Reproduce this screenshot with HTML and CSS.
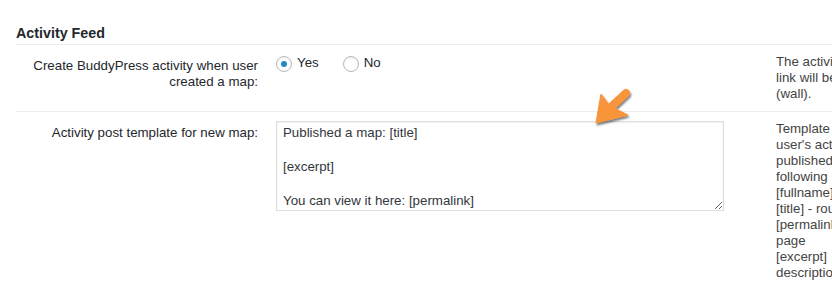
FILE: index.html
```html
<!DOCTYPE html>
<html lang="en">
<head>
<meta charset="utf-8">
<title>Activity Feed settings</title>
<link rel="stylesheet" href="styles.css">
</head>
<body>
<div class="page">
  <h2 class="section-title">Activity Feed</h2>

  <div class="form-row row-first">
    <div class="field-label">Create BuddyPress activity when user<br>created a map:</div>
    <div class="field-control radios">
      <label class="radio-option"><input type="radio" name="bp_activity" class="radio" checked><span>Yes</span></label>
      <label class="radio-option"><input type="radio" name="bp_activity" class="radio"><span>No</span></label>
    </div>
    <div class="field-desc">The activity about the new map with<br>link will be posted to user's stream<br>(wall).</div>
  </div>

  <div class="form-row">
    <div class="field-label">Activity post template for new map:</div>
    <div class="field-control">
      <textarea class="template-box">Published a map: [title]

[excerpt]

You can view it here: [permalink]</textarea>
    </div>
    <div class="field-desc">Template for the activity post in<br>user's activity stream when a map is<br>published. You can use the<br>following placeholders:<br>[fullname] - user's full name<br>[title] - route map title<br>[permalink] - link to the map<br>page<br>[excerpt]&nbsp;&nbsp; - map short<br>description</div>
  </div>

  <svg class="pointer-arrow" width="50" height="50" viewBox="0 0 50 50" aria-hidden="true">
    <defs>
      <filter id="arrowShadow" x="-30%" y="-30%" width="160%" height="160%">
        <feGaussianBlur in="SourceAlpha" stdDeviation="1.2"/>
        <feOffset dx="1" dy="2" result="b"/>
        <feComponentTransfer><feFuncA type="linear" slope="0.55"/></feComponentTransfer>
        <feMerge><feMergeNode/><feMergeNode in="SourceGraphic"/></feMerge>
      </filter>
    </defs>
    <g filter="url(#arrowShadow)" fill="#f8953b" stroke="#f8953b">
      <line x1="36" y1="8" x2="21" y2="22" stroke-width="8" stroke-linecap="round"/>
      <polygon points="6,38 11,9 20,21 38,30" stroke-width="1" stroke-linejoin="round"/>
    </g>
  </svg>
</div>
</body>
</html>
```

FILE: styles.css
```css
html, body {
  margin: 0;
  padding: 0;
  background: #fff;
  overflow: hidden;
}

body {
  font-family: "Liberation Sans", Arial, sans-serif;
  font-size: 13.3px;
  color: #32373c;
}

.page {
  position: relative;
  padding: 24px 0 0 16px;
  width: 1100px;
}

.section-title {
  margin: 0 0 2px;
  font-size: 14.3px;
  line-height: 18px;
  font-weight: 700;
  color: #23282d;
}

.form-row {
  display: grid;
  grid-template-columns: 242px 448px auto;
  column-gap: 18px;
  border-top: 1px solid #ececec;
  padding: 9px 0;
  line-height: 16px;
}

.form-row > .field-desc {
  margin-left: 34px;
}

.field-label {
  text-align: right;
  padding-top: 4px;
  color: #23282d;
}

.field-desc {
  white-space: nowrap;
  color: #444;
}

.radios {
  display: flex;
  align-items: flex-start;
  gap: 24px;
  padding-top: 1px;
}

.radio-option {
  display: flex;
  align-items: flex-start;
  gap: 5px;
  color: #23282d;
}

.radio {
  appearance: none;
  -webkit-appearance: none;
  margin: 1px 0 0;
  width: 16px;
  height: 16px;
  border: 1px solid #b4b9be;
  border-radius: 50%;
  background: #fff;
  box-shadow: inset 0 1px 2px rgba(0, 0, 0, 0.07);
  display: flex;
  align-items: center;
  justify-content: center;
  box-sizing: border-box;
}

.radio:checked::before {
  content: "";
  width: 6px;
  height: 6px;
  border-radius: 50%;
  background: #1e8cbe;
}

.template-box {
  display: block;
  box-sizing: border-box;
  width: 448px;
  height: 90px;
  margin: 0;
  padding: 2px 6px;
  border: 1px solid #ddd;
  box-shadow: inset 0 1px 2px rgba(0, 0, 0, 0.07);
  font-family: "Liberation Sans", Arial, sans-serif;
  font-size: 13.3px;
  line-height: 17px;
  color: #32373c;
  resize: vertical;
  overflow: hidden;
}

.pointer-arrow {
  position: absolute;
  left: 590px;
  top: 85px;
}
```
